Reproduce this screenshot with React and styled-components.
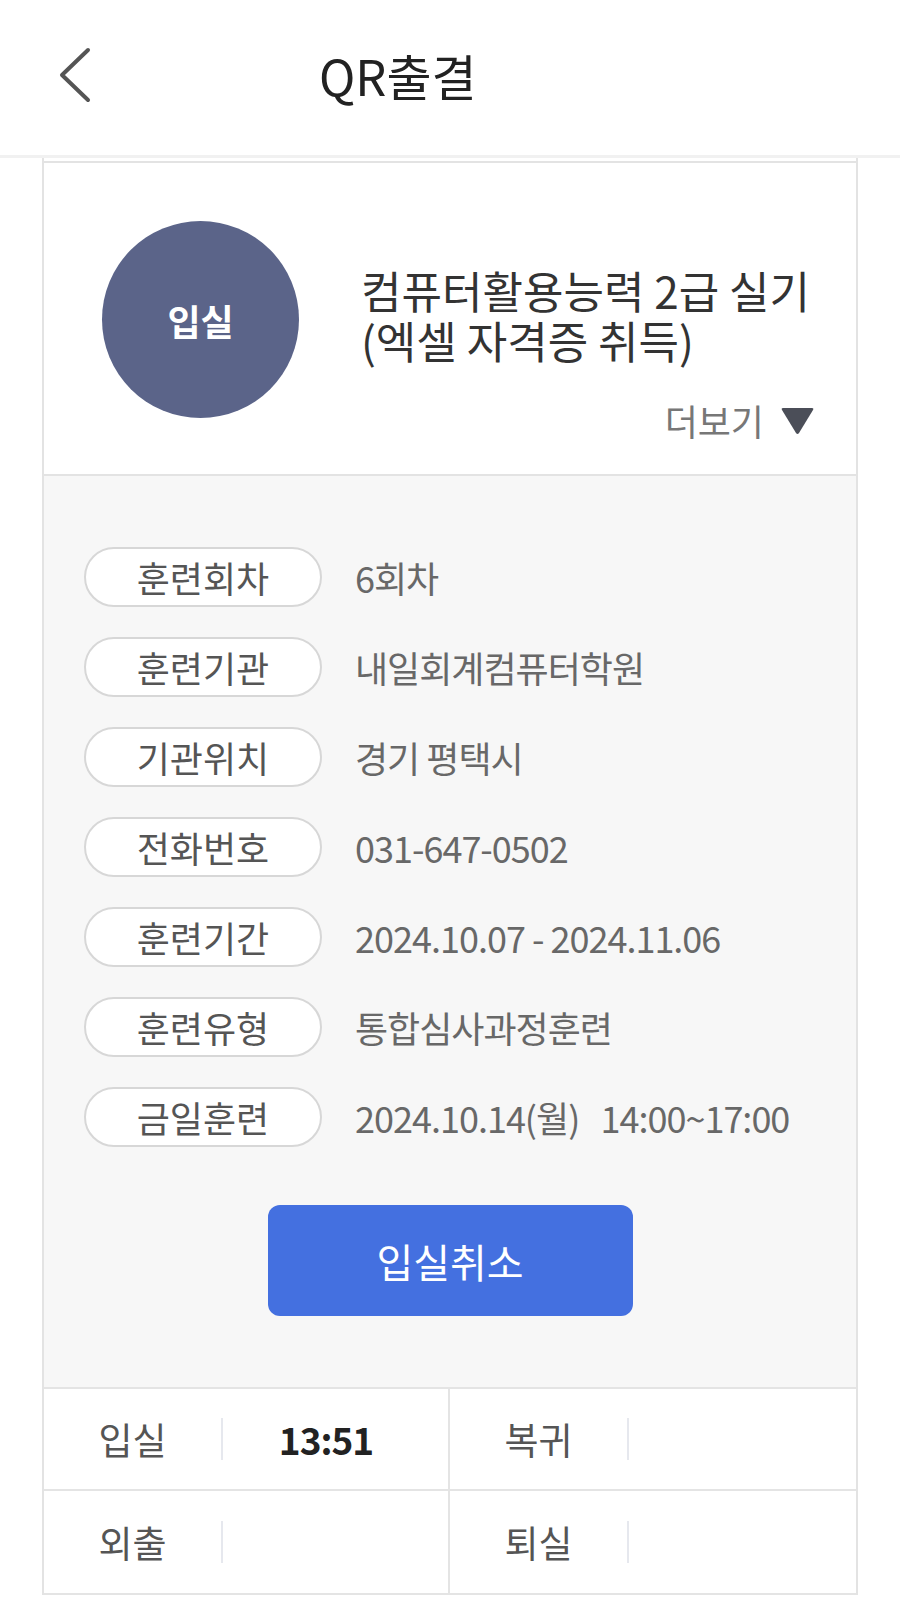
import React from "react"
import styled, { createGlobalStyle } from "styled-components"

const GlobalStyle = createGlobalStyle`
  * { box-sizing: border-box; }
  body {
    margin: 0;
    background: #ffffff;
    font-family: "Noto Sans CJK KR", "Noto Sans", sans-serif;
    color: #333;
  }
`

const Page = styled.div`
  width: 900px;
  min-height: 1597px;
  background: #fff;
`

const Header = styled.header`
  height: 158px;
  display: flex;
  align-items: center;
  padding: 0 0 6px 58px;
  border-bottom: 3px solid #f1f1f1;
`

const BackButton = styled.button`
  border: 0;
  background: none;
  padding: 0;
  width: 34px;
  height: 56px;
  display: flex;
  align-items: center;
  cursor: pointer;
`

const Title = styled.h1`
  margin: 0 0 0 227px;
  font-size: 49px;
  font-weight: 400;
  color: #222;
`

const Card = styled.section`
  margin: 0 42px;
  padding-top: 3px;
  border-left: 2px solid #e3e3e3;
  border-right: 2px solid #e3e3e3;
`

const Summary = styled.div`
  display: flex;
  align-items: flex-start;
  background: #fff;
  border-top: 2px solid #e3e3e3;
  border-bottom: 2px solid #e3e3e3;
  padding: 58px 41px 33px 58px;
`

const StatusCircle = styled.div`
  flex: none;
  width: 197px;
  height: 197px;
  border-radius: 50%;
  background: #5b6489;
  color: #fff;
  display: flex;
  align-items: center;
  justify-content: center;
  font-size: 36px;
  font-weight: 700;
`

const Info = styled.div`
  flex: 1;
  margin-left: 62px;
  display: flex;
  flex-direction: column;
`

const CourseName = styled.h2`
  margin: 44px 0 0;
  font-size: 44px;
  line-height: 50px;
  font-weight: 400;
  color: #333;
`

const MoreButton = styled.button`
  align-self: flex-end;
  margin-top: 34px;
  border: 0;
  background: none;
  padding: 0;
  display: flex;
  align-items: center;
  gap: 16px;
  font-family: inherit;
  font-size: 36px;
  line-height: 42px;
  color: #777;
`

const Details = styled.div`
  background: #f7f7f7;
  padding: 71px 0 71px 40px;
  display: flex;
  flex-direction: column;
`

const DetailList = styled.dl`
  margin: 0;
  display: flex;
  flex-direction: column;
  gap: 30px;
`

const DetailRow = styled.div`
  display: flex;
  align-items: center;
`

const Pill = styled.dt`
  flex: none;
  width: 238px;
  height: 60px;
  border: 2px solid #d7d7d7;
  border-radius: 30px;
  background: #fff;
  display: flex;
  align-items: center;
  justify-content: center;
  font-size: 36px;
  color: #555;
`

const Value = styled.dd`
  margin: 0 0 0 33px;
  font-size: 36px;
  letter-spacing: -1px;
  color: #686868;
  white-space: pre;
`

const CancelButton = styled.button`
  align-self: center;
  margin: 58px 0 0 -40px;
  width: 365px;
  height: 111px;
  border: 0;
  border-radius: 12px;
  background: #4470e0;
  color: #fff;
  font-family: inherit;
  font-size: 40px;
`

const Records = styled.div`
  display: grid;
  grid-template-columns: 1fr 1fr;
  border-top: 2px solid #e4e4e4;
  border-bottom: 2px solid #e4e4e4;
  background: #fff;
`

const RecordCell = styled.div`
  height: 102px;
  display: flex;
  align-items: center;
  border-right: ${(p) => (p.$last ? "0" : "2px solid #e4e4e4")};
  border-bottom: ${(p) => (p.$bottom ? "0" : "2px solid #e4e4e4")};
`

const RecordLabel = styled.span`
  width: 177px;
  text-align: center;
  font-size: 37px;
  color: #555;
`

const Divider = styled.span`
  width: 2px;
  height: 42px;
  background: #e6e8ee;
`

const RecordTime = styled.span`
  width: 206px;
  text-align: center;
  font-size: 37px;
  font-weight: 700;
  color: #222;
  letter-spacing: -1px;
`

const details = [
  ["훈련회차", "6회차"],
  ["훈련기관", "내일회계컴퓨터학원"],
  ["기관위치", "경기 평택시"],
  ["전화번호", "031-647-0502"],
  ["훈련기간", "2024.10.07 - 2024.11.06"],
  ["훈련유형", "통합심사과정훈련"],
  ["금일훈련", "2024.10.14(월)   14:00~17:00"],
]

const records = [
  ["입실", "13:51"],
  ["복귀", ""],
  ["외출", ""],
  ["퇴실", ""],
]

export default function App() {
  return (
    <Page>
      <GlobalStyle />
      <Header>
        <BackButton aria-label="뒤로">
          <svg width="34" height="56" viewBox="0 0 34 56">
            <polyline points="30,3 4,28 30,53" fill="none" stroke="#555" strokeWidth="4" strokeLinecap="round" strokeLinejoin="round" />
          </svg>
        </BackButton>
        <Title>QR출결</Title>
      </Header>

      <Card>
        <Summary>
          <StatusCircle>입실</StatusCircle>
          <Info>
            <CourseName>
              컴퓨터활용능력 2급 실기
              <br />
              (엑셀 자격증 취득)
            </CourseName>
            <MoreButton>
              더보기
              <svg width="35" height="30" viewBox="0 0 35 30">
                <path d="M3 3 H32 Q34 3 33 5 L19 28 Q17.5 30 16 28 L2 5 Q1 3 3 3 Z" fill="#4b4e58" />
              </svg>
            </MoreButton>
          </Info>
        </Summary>

        <Details>
          <DetailList>
            {details.map(([label, value]) => (
              <DetailRow key={label}>
                <Pill>{label}</Pill>
                <Value>{value}</Value>
              </DetailRow>
            ))}
          </DetailList>
          <CancelButton>입실취소</CancelButton>
        </Details>

        <Records>
          {records.map(([label, time], i) => (
            <RecordCell key={label} $last={i % 2 === 1} $bottom={i >= 2}>
              <RecordLabel>{label}</RecordLabel>
              <Divider />
              <RecordTime>{time}</RecordTime>
            </RecordCell>
          ))}
        </Records>
      </Card>
    </Page>
  )
}
